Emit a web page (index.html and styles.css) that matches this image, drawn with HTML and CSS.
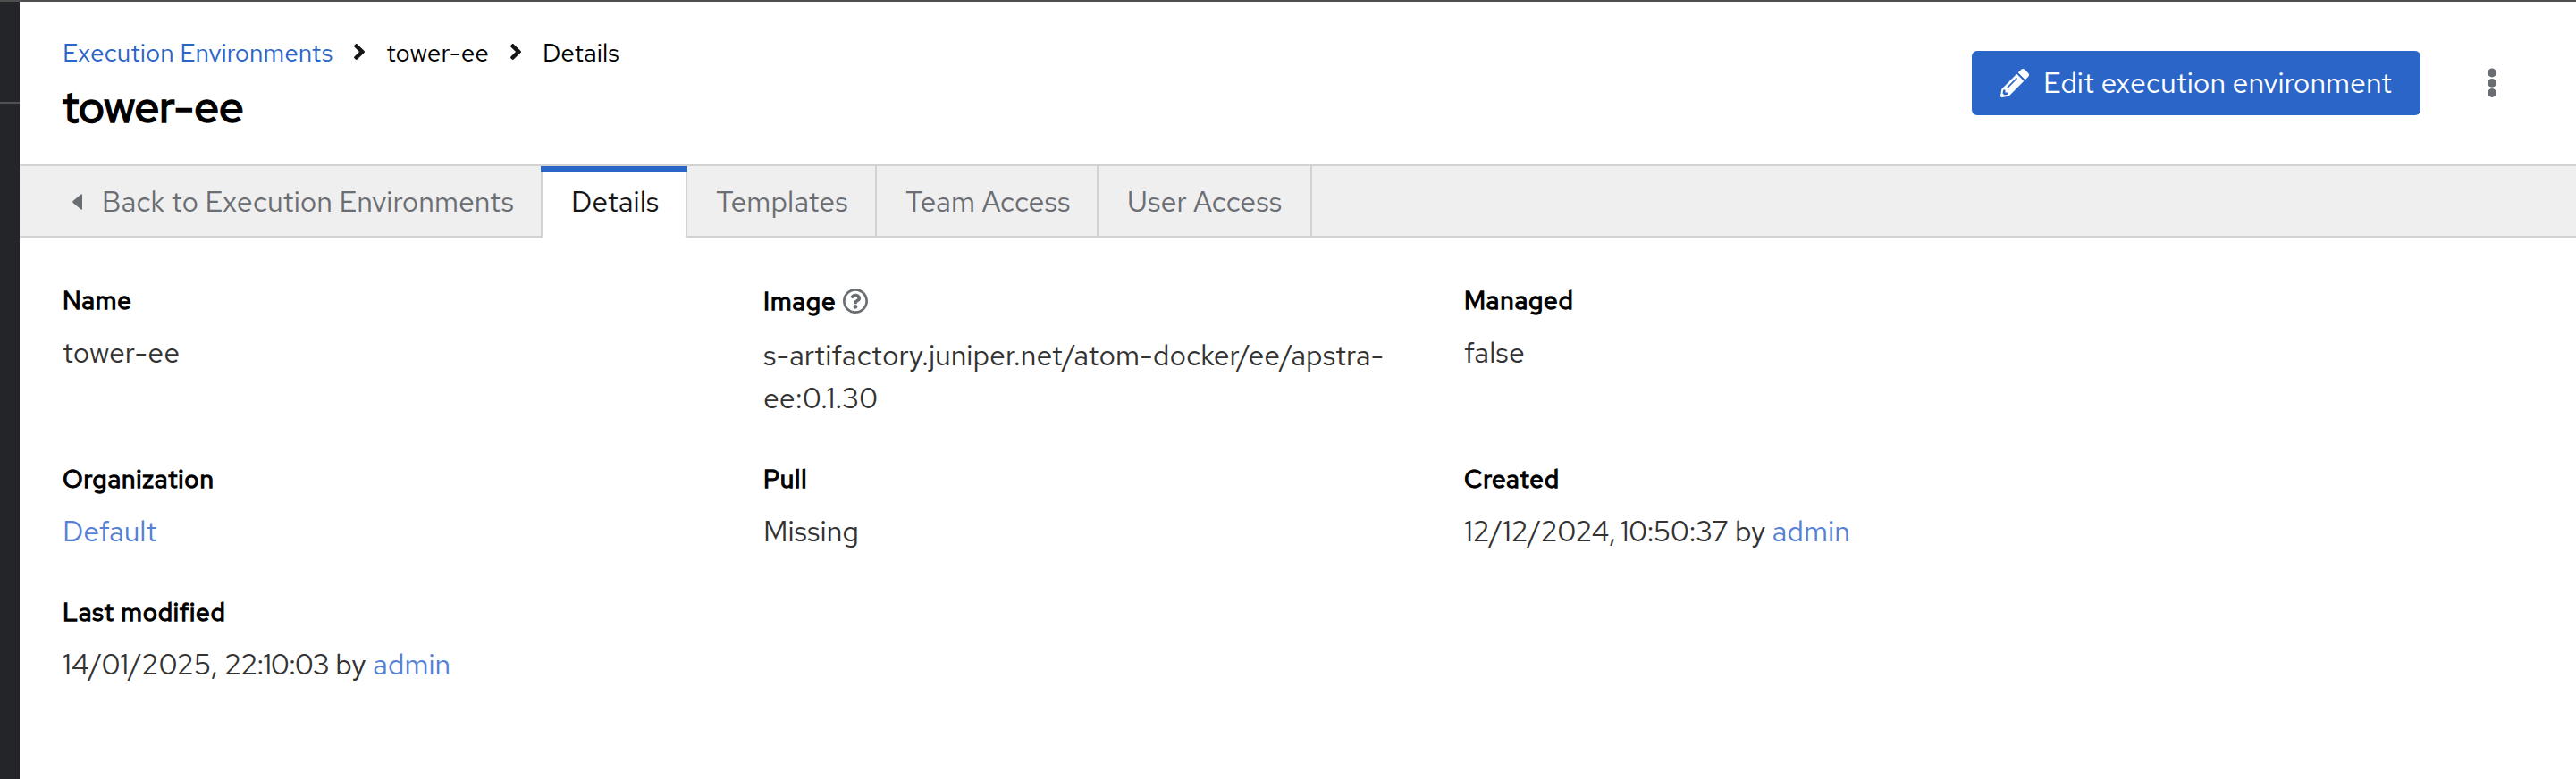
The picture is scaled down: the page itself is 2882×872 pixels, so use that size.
FILE: index.html
```html
<!DOCTYPE html>
<html lang="en">
<head>
<meta charset="utf-8">
<title>tower-ee | Execution Environments</title>
<link rel="stylesheet" href="styles.css">
</head>
<body>
<div class="topline"></div>
<div class="app">
  <aside class="sidebar"><div class="sidebar-divider"></div></aside>
  <main class="main">
    <header class="header">
      <div class="heading">
        <nav class="breadcrumb">
          <a class="crumb crumb-link" href="#">Execution Environments</a>
          <svg class="chevron" viewBox="24 95 208 322" preserveAspectRatio="none"><path d="M224.3 273l-136 136c-9.4 9.4-24.6 9.4-33.9 0l-22.6-22.6c-9.4-9.4-9.4-24.6 0-33.9l96.4-96.4-96.4-96.4c-9.4-9.4-9.4-24.6 0-33.9L54.3 103c9.4-9.4 24.6-9.4 33.9 0l136 136c9.5 9.4 9.5 24.6.1 34z"/></svg>
          <span class="crumb">tower-ee</span>
          <svg class="chevron" viewBox="24 95 208 322" preserveAspectRatio="none"><path d="M224.3 273l-136 136c-9.4 9.4-24.6 9.4-33.9 0l-22.6-22.6c-9.4-9.4-9.4-24.6 0-33.9l96.4-96.4-96.4-96.4c-9.4-9.4-9.4-24.6 0-33.9L54.3 103c9.4-9.4 24.6-9.4 33.9 0l136 136c9.5 9.4 9.5 24.6.1 34z"/></svg>
          <span class="crumb">Details</span>
        </nav>
        <h1 class="title">tower-ee</h1>
      </div>
      <div class="actions">
        <button class="edit">
          <svg class="pencil" viewBox="0 0 512 512"><path d="M497.9 142.1l-46.1 46.1c-4.7 4.7-12.3 4.7-17 0l-111-111c-4.7-4.7-4.7-12.3 0-17l46.1-46.1c18.7-18.7 49.1-18.7 67.9 0l60.1 60.1c18.8 18.7 18.8 49.1 0 67.9zM284.2 99.8L21.6 362.4.4 483.9c-2.9 16.4 11.4 30.6 27.8 27.8l121.5-21.3 262.6-262.6c4.7-4.7 4.7-12.3 0-17l-111-111c-4.8-4.7-12.4-4.7-17.1 0zM124.1 339.9c-5.5-5.5-5.5-14.3 0-19.8l154-154c5.5-5.5 14.3-5.5 19.8 0s5.5 14.3 0 19.8l-154 154c-5.5 5.5-14.3 5.5-19.8 0zM88 424h48v36.3l-64.5 11.3-31.1-31.1L51.7 376H88v48z"/></svg>
          <span>Edit execution environment</span>
        </button>
        <svg class="kebab" viewBox="0 0 10 34"><circle cx="5" cy="5.5" r="4.9"/><circle cx="5" cy="16.8" r="4.9"/><circle cx="5" cy="28" r="4.9"/></svg>
      </div>
    </header>
    <nav class="tabs">
      <a class="tab tab-back"><svg class="caret" viewBox="0 0 11 18"><path d="M9.6.4L.6 8.1Q0 9 .6 9.9L9.6 17.6Q11 18.300 11 16.800V1.200Q11-.3 9.600.4Z"/></svg><span>Back to Execution Environments</span></a>
      <a class="tab tab-details">Details</a>
      <a class="tab tab-templates">Templates</a>
      <a class="tab tab-team">Team Access</a>
      <a class="tab tab-user">User Access</a>
      <div class="tab-fill"></div>
    </nav>
    <dl class="details">
      <div class="field"><dt>Name</dt><dd>tower-ee</dd></div>
      <div class="field">
        <dt class="term-image">Image <svg class="help" viewBox="8 8 496 496"><path d="M256 8C119.043 8 8 119.083 8 256c0 136.997 111.043 248 248 248s248-111.003 248-248C504 119.083 392.957 8 256 8zm0 448c-110.532 0-200-89.431-200-200 0-110.495 89.472-200 200-200 110.491 0 200 89.471 200 200 0 110.53-89.431 200-200 200zm107.244-255.2c0 67.052-72.421 68.084-72.421 92.863V300c0 6.627-5.373 12-12 12h-45.647c-6.627 0-12-5.373-12-12v-8.659c0-35.745 27.1-50.034 47.579-61.516 17.561-9.845 28.324-16.541 28.324-29.579 0-17.246-21.999-28.693-39.784-28.693-23.189 0-33.894 10.977-48.942 29.969-4.057 5.12-11.46 6.071-16.666 2.124l-27.824-21.098c-5.107-3.872-6.251-11.066-2.644-16.363C184.846 131.491 214.94 112 261.794 112c49.071 0 101.45 38.304 101.45 88.8zM298 368c0 23.159-18.841 42-42 42s-42-18.841-42-42 18.841-42 42-42 42 18.841 42 42z"/></svg></dt>
        <dd>s-artifactory.juniper.net/atom-docker/ee/apstra-<br>ee:0.1.30</dd>
      </div>
      <div class="field"><dt>Managed</dt><dd>false</dd></div>
      <div class="field"><dt>Organization</dt><dd><a href="#">Default</a></dd></div>
      <div class="field"><dt>Pull</dt><dd>Missing</dd></div>
      <div class="field"><dt>Created</dt><dd><span class="date-created">12/12/2024, </span><span class="time time-created">10:50:37</span> by <a href="#">admin</a></dd></div>
      <div class="field"><dt>Last modified</dt><dd>14/01/2025, <span class="time">22:10:03</span> by <a href="#">admin</a></dd></div>
    </dl>
  </main>
</div>
</body>
</html>
```
FILE: styles.css
```css
* { box-sizing: border-box; }
body {
  margin: 0;
  background: #fff;
  color: #000;
  font-family: "Red Hat Text", Lato, "Open Sans", sans-serif;
}
a { text-decoration: none; }
svg { display: block; flex: none; }

.topline { height: 2px; background: #4f4f4f; }
.app { display: flex; height: 870px; }
.sidebar { width: 22px; background: #242529; padding-top: 112px; }
.sidebar-divider { height: 2px; background: #4f5255; }
.main { flex: 1; }

.header {
  display: flex;
  justify-content: space-between;
  height: 182px;
  padding: 36px 89px 0 48px;
}
.breadcrumb { display: flex; align-items: center; height: 42px; }
.crumb { font-size: 28px; line-height: 42px; }
.crumb-link { color: #2b65c7; }
.chevron { width: 12px; height: 18px; margin: 0 24px 2px 24px; fill: #151515; }
.title {
  margin: 9px 0 0;
  font-family: "Red Hat Display", "Red Hat Text", Lato, sans-serif;
  font-size: 48px;
  font-weight: 500;
  line-height: 62px;
  letter-spacing: .4px;
  -webkit-text-stroke: 1.4px #000;
}
.actions { display: flex; align-items: center; gap: 75px; height: 72px; margin-top: 19px; }
.edit {
  display: flex;
  align-items: center;
  gap: 16px;
  width: 502px;
  height: 72px;
  padding: 0 0 0 32px;
  border: 0;
  border-radius: 6px;
  background: #2b65c7;
  color: #fff;
  font: 400 32px/48px "Red Hat Text", Lato, "Open Sans", sans-serif;
}
.pencil { width: 32px; height: 32px; fill: #fff; }
.kebab { width: 10px; height: 34px; fill: #6a6e73; }

.tabs { display: flex; height: 82px; border-top: 2px solid #d2d2d2; }
.tab {
  display: flex;
  align-items: center;
  border-right: 2px solid #d2d2d2;
  border-bottom: 2px solid #d2d2d2;
  background: #efefef;
  color: #6a6e73;
  font-size: 32px;
  line-height: 48px;
  padding-top: 1px;
  white-space: nowrap;
}
.tab-back { width: 585px; padding-left: 59px; gap: 22px; }
.caret { width: 11px; height: 18px; fill: #6a6e73; }
.tab-details {
  position: relative;
  width: 162px;
  padding-left: 32px;
  border-bottom-color: #fff;
  background: #fff;
  color: #151515;
}
.tab-details::before {
  content: "";
  position: absolute;
  top: 0;
  left: -2px;
  width: 164px;
  height: 6px;
  background: #2b65c7;
}
.tab-templates { width: 212px; padding-left: 32px; }
.tab-team { width: 248px; padding-left: 32px; }
.tab-user { width: 239px; padding-left: 32px; }
.tab-fill { flex: 1; border-bottom: 2px solid #d2d2d2; background: #efefef; }

.details {
  display: grid;
  grid-template-columns: repeat(3, 736px);
  column-gap: 48px;
  row-gap: 45px;
  margin: 0;
  padding: 49px 48px 0;
}
dt {
  font-size: 28px;
  font-weight: 400;
  line-height: 42px;
  letter-spacing: .8px;
  -webkit-text-stroke: 1.3px #000;
  font-variant-ligatures: none;
}
.term-image { display: flex; align-items: center; gap: 8px; height: 45px; padding-bottom: 2px; }
.help { width: 28px; height: 28px; fill: #6a6e73; stroke: none; }
dd { margin: 14px 0 0; color: #333; font-size: 32px; line-height: 48px; }
dd a { color: #5681d4; }
.time { letter-spacing: -1.1px; }
.date-created { letter-spacing: -.3px; }
.time-created { margin-left: -2px; letter-spacing: -.5px; }
```
